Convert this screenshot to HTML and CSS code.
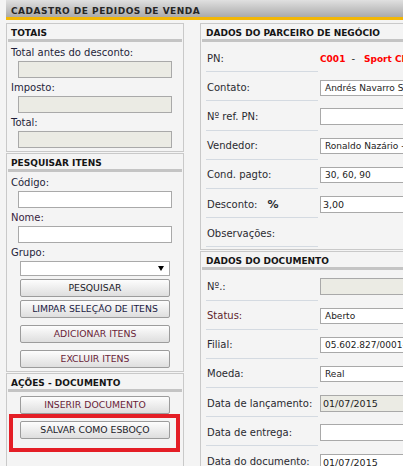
FILE: index.html
```html
<!DOCTYPE html>
<html lang="pt-BR">
<head>
<meta charset="utf-8">
<title>Cadastro de Pedidos de Venda</title>
<link rel="stylesheet" href="styles.css">
</head>
<body>
<div class="titlebar">CADASTRO DE PEDIDOS DE VENDA</div>
<div class="main">
  <div class="col-left">
    <section class="panel p-totals">
      <h2 class="panel-head">TOTAIS</h2>
      <div class="flabel first">Total antes do desconto:</div>
      <div class="box wide dis"></div>
      <div class="flabel">Imposto:</div>
      <div class="box wide dis"></div>
      <div class="flabel">Total:</div>
      <div class="box wide dis"></div>
    </section>
    <section class="panel p-search">
      <h2 class="panel-head">PESQUISAR ITENS</h2>
      <div class="flabel first">Código:</div>
      <div class="box wide"></div>
      <div class="flabel alt">Nome:</div>
      <div class="box wide"></div>
      <div class="flabel">Grupo:</div>
      <div class="lselect"><span class="arrow"></span></div>
      <div class="btn">PESQUISAR</div>
      <div class="btn navy">LIMPAR SELEÇÃO DE ITENS</div>
      <div class="btn maroon gap">ADICIONAR ITENS</div>
      <div class="btn maroon gap">EXCLUIR ITENS</div>
    </section>
    <section class="panel p-actions">
      <h2 class="panel-head">AÇÕES - DOCUMENTO</h2>
      <div class="btn maroon first-btn">INSERIR DOCUMENTO</div>
      <div class="highlight">
        <div class="btn inner">SALVAR COMO ESBOÇO</div>
      </div>
    </section>
  </div>
  <div class="col-right">
    <section class="panel p-partner">
      <h2 class="panel-head">DADOS DO PARCEIRO DE NEGÓCIO</h2>
      <div class="rows">
        <div class="row"><div class="rlabel">PN:</div><div class="rval"><span class="red">C001</span><span class="dash">-</span><span class="red">Sport Club Internacional</span></div></div>
        <div class="row"><div class="rlabel">Contato:</div><div class="rval"><div class="box sel">Andrés Navarro Silva</div></div></div>
        <div class="row"><div class="rlabel">Nº ref. PN:</div><div class="rval"><div class="box txt"></div></div></div>
        <div class="row"><div class="rlabel">Vendedor:</div><div class="rval"><div class="box sel">Ronaldo Nazário - Vendas</div></div></div>
        <div class="row"><div class="rlabel">Cond. pagto:</div><div class="rval"><div class="box sel">30, 60, 90</div></div></div>
        <div class="row"><div class="rlabel">Desconto: <b class="pct">%</b></div><div class="rval"><div class="box txt">3,00</div></div></div>
        <div class="row"><div class="rlabel">Observações:</div><div class="rval"></div></div>
      </div>
    </section>
    <section class="panel p-doc">
      <h2 class="panel-head">DADOS DO DOCUMENTO</h2>
      <div class="rows">
        <div class="row"><div class="rlabel">Nº.:</div><div class="rval"><div class="box txt dis"></div></div></div>
        <div class="row"><div class="rlabel maroon-l">Status:</div><div class="rval"><div class="box sel">Aberto</div></div></div>
        <div class="row"><div class="rlabel">Filial:</div><div class="rval"><div class="box sel">05.602.827/0001-70</div></div></div>
        <div class="row"><div class="rlabel">Moeda:</div><div class="rval"><div class="box sel">Real</div></div></div>
        <div class="row"><div class="rlabel">Data de lançamento:</div><div class="rval"><div class="box txt dis">01/07/2015</div></div></div>
        <div class="row"><div class="rlabel">Data de entrega:</div><div class="rval"><div class="box txt"></div></div></div>
        <div class="row"><div class="rlabel">Data do documento:</div><div class="rval"><div class="box txt">01/07/2015</div></div></div>
      </div>
    </section>
  </div>
</div>
</body>
</html>
```
FILE: styles.css
```css
* { box-sizing: border-box; margin: 0; padding: 0; }
html, body { width: 403px; height: 466px; overflow: hidden; }
body {
  background: #f4f4f4;
  font-family: "DejaVu Sans", Verdana, sans-serif;
  font-size: 10px;
  color: #2b2b33;
}
.titlebar {
  margin-left: 6px;
  height: 20px;
  padding: 6px 0 0 5px;
  line-height: 11px;
  font-size: 9px;
  font-weight: bold;
  letter-spacing: 0.5px;
  color: #262626;
  background: linear-gradient(#e0e0e0, #aaaaaa);
  border-bottom: 3px solid #f2b705;
  white-space: nowrap;
}
.main {
  display: flex;
  gap: 16px;
  padding: 3px 0 0 6px;
}
.col-left {
  width: 178px;
  flex: none;
  display: flex;
  flex-direction: column;
  gap: 1px;
}
.col-right {
  width: 280px;
  flex: none;
  display: flex;
  flex-direction: column;
  gap: 1px;
}
.panel {
  border: 1px solid #c9c9c9;
  background: #f4f4f4;
}
.panel-head {
  margin: 0 1px;
  padding: 4px 0 0 3px;
  font-size: 9px;
  line-height: 11px;
  font-weight: bold;
  color: #151515;
  border-bottom: 3px solid #c4c4c4;
  white-space: nowrap;
}
.col-right .panel-head { padding-left: 4px; }

/* left column */
.p-totals, .p-search { padding-bottom: 3px; }
.p-actions { padding-bottom: 14px; }
.flabel {
  margin-top: 4px;
  padding-left: 4px;
  line-height: 12px;
  color: #1f1f3a;
}
.flabel.first { margin-top: 5px; }
.flabel.alt { color: #3a1f3f; }
.box {
  border: 1px solid #a9a9a9;
  background: #fff;
  white-space: nowrap;
  overflow: hidden;
}
.box.dis { background: #ebebe4; }
.box.wide {
  margin: 2px 0 0 11px;
  width: 154px;
  height: 17px;
}
.lselect {
  margin: 2px 0 0 13px;
  width: 150px;
  height: 15px;
  border: 1px solid #a9a9a9;
  background: #fff;
  display: flex;
  justify-content: flex-end;
  align-items: center;
  padding-right: 5px;
}
.arrow {
  width: 0;
  height: 0;
  border-left: 3px solid transparent;
  border-right: 3px solid transparent;
  border-top: 5px solid #000;
}
.btn {
  margin: 3px 0 0 13px;
  width: 150px;
  height: 18px;
  border: 1px solid #9c9c9c;
  border-radius: 2px;
  background: linear-gradient(#fdfdfd, #dedede);
  font-size: 9.3px;
  line-height: 16px;
  text-align: center;
  color: #222228;
  white-space: nowrap;
}
.btn.gap { margin-top: 7px; }
.btn.navy { color: #1c1c44; }
.btn.maroon { color: #6a1e38; }
.btn.first-btn { margin-top: 4px; }
.highlight {
  margin-left: 2px;
  width: 171px;
  border: 4px solid #e41e26;
  padding: 3px 0 9px 7px;
}
.btn.inner { margin: 0; }

/* right column */
.rows { margin-top: 1px; }
.p-partner { padding-bottom: 2px; }
.row {
  display: flex;
  height: 29.2px;
}
.rlabel {
  width: 112px;
  flex: none;
  margin-left: 5px;
  padding: 3px 0 0 1px;
  border-bottom: 1px solid #d4dae1;
  display: flex;
  align-items: center;
  line-height: 12px;
  white-space: nowrap;
  color: #2a2a30;
}
.rlabel.maroon-l { color: #5e1f2c; }
.pct { margin-left: 10px; font-size: 11px; }
.rval {
  margin-left: 2px;
  flex: 1;
  display: flex;
  align-items: center;
  padding-top: 2px;
  white-space: nowrap;
}
.box.sel {
  width: 140px;
  height: 16px;
  padding-left: 4px;
  font-size: 9px;
  line-height: 14px;
  color: #222;
}
.box.txt {
  width: 140px;
  height: 17px;
  padding-left: 2px;
  font-size: 9.5px;
  line-height: 15px;
  color: #222;
}
.red {
  color: #ff0000;
  font-weight: bold;
  font-size: 9px;
}
.dash {
  margin: 0 9px 0 6px;
  font-size: 10px;
  color: #333;
}
```
